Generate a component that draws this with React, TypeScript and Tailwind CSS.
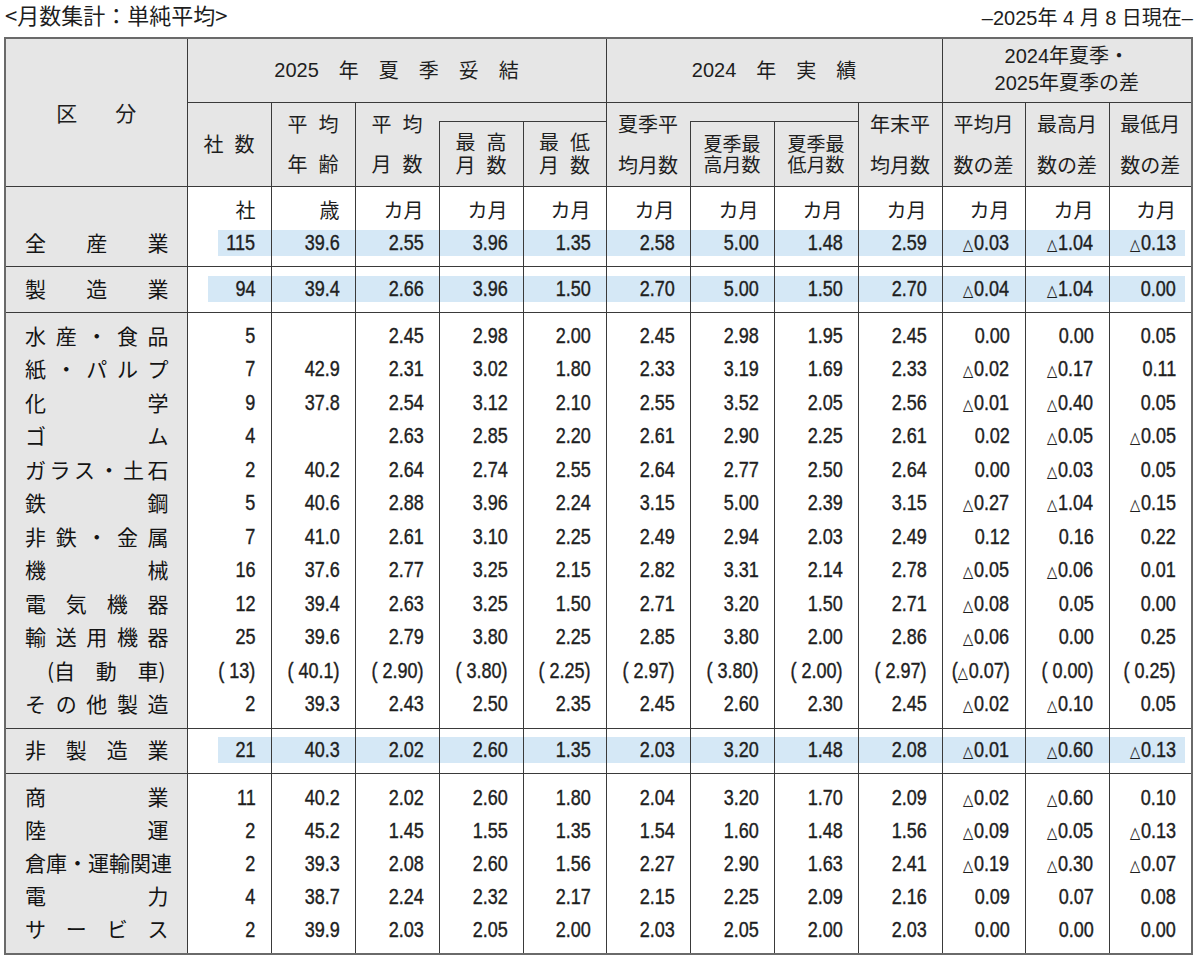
import React from 'react';

// 月数集計テーブル (単純平均)

const NUM = "font-['Liberation_Sans','Noto_Sans_CJK_JP',sans-serif]";
const JP = "font-['Noto_Sans_CJK_JP',sans-serif]";
const LINE = 'border-[#3a3a3a]';
const GRAY = 'bg-[#e6e6e6]';
const BAND = 'bg-[#d5e8f6]';

type Row = { label: string[]; indent?: boolean; v: string[] };

const manufacturing: Row[] = [
  { label: ['水', '産', '・', '食', '品'], v: ['5', '', '2.45', '2.98', '2.00', '2.45', '2.98', '1.95', '2.45', '0.00', '0.00', '0.05'] },
  { label: ['紙', '・', 'パ', 'ル', 'プ'], v: ['7', '42.9', '2.31', '3.02', '1.80', '2.33', '3.19', '1.69', '2.33', '△0.02', '△0.17', '0.11'] },
  { label: ['化', '学'], v: ['9', '37.8', '2.54', '3.12', '2.10', '2.55', '3.52', '2.05', '2.56', '△0.01', '△0.40', '0.05'] },
  { label: ['ゴ', 'ム'], v: ['4', '', '2.63', '2.85', '2.20', '2.61', '2.90', '2.25', '2.61', '0.02', '△0.05', '△0.05'] },
  { label: ['ガ', 'ラ', 'ス', '・', '土', '石'], v: ['2', '40.2', '2.64', '2.74', '2.55', '2.64', '2.77', '2.50', '2.64', '0.00', '△0.03', '0.05'] },
  { label: ['鉄', '鋼'], v: ['5', '40.6', '2.88', '3.96', '2.24', '3.15', '5.00', '2.39', '3.15', '△0.27', '△1.04', '△0.15'] },
  { label: ['非', '鉄', '・', '金', '属'], v: ['7', '41.0', '2.61', '3.10', '2.25', '2.49', '2.94', '2.03', '2.49', '0.12', '0.16', '0.22'] },
  { label: ['機', '械'], v: ['16', '37.6', '2.77', '3.25', '2.15', '2.82', '3.31', '2.14', '2.78', '△0.05', '△0.06', '0.01'] },
  { label: ['電', '気', '機', '器'], v: ['12', '39.4', '2.63', '3.25', '1.50', '2.71', '3.20', '1.50', '2.71', '△0.08', '0.05', '0.00'] },
  { label: ['輸', '送', '用', '機', '器'], v: ['25', '39.6', '2.79', '3.80', '2.25', '2.85', '3.80', '2.00', '2.86', '△0.06', '0.00', '0.25'] },
  { label: ['(自', '動', '車)'], indent: true, v: ['( 13)', '( 40.1)', '( 2.90)', '( 3.80)', '( 2.25)', '( 2.97)', '( 3.80)', '( 2.00)', '( 2.97)', '(△0.07)', '( 0.00)', '( 0.25)'] },
  { label: ['そ', 'の', '他', '製', '造'], v: ['2', '39.3', '2.43', '2.50', '2.35', '2.45', '2.60', '2.30', '2.45', '△0.02', '△0.10', '0.05'] },
];

const nonManufacturing: Row[] = [
  { label: ['商', '業'], v: ['11', '40.2', '2.02', '2.60', '1.80', '2.04', '3.20', '1.70', '2.09', '△0.02', '△0.60', '0.10'] },
  { label: ['陸', '運'], v: ['2', '45.2', '1.45', '1.55', '1.35', '1.54', '1.60', '1.48', '1.56', '△0.09', '△0.05', '△0.13'] },
  { label: ['倉', '庫', '・', '運', '輸', '関', '連'], v: ['2', '39.3', '2.08', '2.60', '1.56', '2.27', '2.90', '1.63', '2.41', '△0.19', '△0.30', '△0.07'] },
  { label: ['電', '力'], v: ['4', '38.7', '2.24', '2.32', '2.17', '2.15', '2.25', '2.09', '2.16', '0.09', '0.07', '0.08'] },
  { label: ['サ', 'ー', 'ビ', 'ス'], v: ['2', '39.9', '2.03', '2.05', '2.00', '2.03', '2.05', '2.00', '2.03', '0.00', '0.00', '0.00'] },
];

const colWidths = ['w-[84px]', 'w-[84px]', 'w-[84px]', 'w-[84px]', 'w-[83px]', 'w-[84px]', 'w-[84px]', 'w-[84px]', 'w-[84px]', 'w-[83px]', 'w-[84px]', 'w-[83px]'];

// narrow figures: Arial-width face squeezed toward the right edge
function Val({ s }: { s: string }) {
  const parts = s.split('△');
  return (
    <span className="inline-block origin-right scale-x-[0.82] [-webkit-text-stroke:0.4px_#1e1e1e]">
      {parts.length === 1 ? (
        s
      ) : (
        <>
          {parts[0]}
          <span className="font-['DejaVu_Sans',sans-serif] text-[16px] mr-[1px] [-webkit-text-stroke:0.2px_#1e1e1e]">△</span>
          {parts[1]}
        </>
      )}
    </span>
  );
}

function Label({ chars, indent, h }: { chars: string[]; indent?: boolean; h: string }) {
  return (
    <div className={`flex items-center justify-between ${h} ${indent ? 'pl-[41px] pr-[21px]' : chars.length > 6 ? 'pl-[19px] pr-[17px]' : 'pl-[19px] pr-[18px]'}`}>
      {chars.map((c, i) => (
        <span key={i}>{c}</span>
      ))}
    </div>
  );
}

function DataRow({ row, h, pad, top }: { row: Row; h: string; pad: string; top: boolean }) {
  return (
    <tr>
      <td className={`${GRAY} border-r ${LINE} p-0 ${pad} ${top ? 'border-t' : ''} text-[21px] text-[#141414] ${JP}`}>
        <Label chars={row.label} indent={row.indent} h={h} />
      </td>
      {row.v.map((s, i) => (
        <td key={i} className={`p-0 ${pad} ${i < 11 ? 'border-r' : ''} ${top ? 'border-t' : ''} ${LINE}`}>
          <div className={`${h} flex items-center justify-end pr-[15px] whitespace-pre`}>
            <Val s={s} />
          </div>
        </td>
      ))}
    </tr>
  );
}

function BandRow({ row, start, pad, top }: { row: Row; start: string; pad: string; top: boolean }) {
  return (
    <tr>
      <td className={`${GRAY} border-r ${LINE} p-0 ${pad} ${top ? 'border-t' : ''} text-[21px] text-[#141414] ${JP}`}>
        <Label chars={row.label} h="h-[26px]" />
      </td>
      {row.v.map((s, i) => (
        <td key={i} className={`p-0 ${pad} ${i < 11 ? 'border-r' : ''} ${top ? 'border-t' : ''} ${LINE}`}>
          <div
            className={`h-[26px] ${BAND} flex items-center justify-end ${i === 0 ? start : ''} ${
              i === 11 ? 'mr-[6px] pr-[9px]' : 'pr-[15px]'
            }`}
          >
            <Val s={s} />
          </div>
        </td>
      ))}
    </tr>
  );
}

function Spread({ a, b, gap }: { a: React.ReactNode; b: React.ReactNode; gap: string }) {
  return (
    <div className={`flex flex-col items-center leading-[20px] ${gap}`}>
      <div>{a}</div>
      <div>{b}</div>
    </div>
  );
}

function Pair({ x, y }: { x: string; y: string }) {
  return (
    <span className="inline-flex gap-[11px]">
      <span>{x}</span>
      <span>{y}</span>
    </span>
  );
}

export default function App() {
  const units = ['社', '歳', 'カ月', 'カ月', 'カ月', 'カ月', 'カ月', 'カ月', 'カ月', 'カ月', 'カ月', 'カ月'];

  return (
    <div className={`w-[1200px] h-[958px] bg-white pl-[4px] text-[#1e1e1e] ${JP}`}>
      <div className="h-[37px] w-[1189px] flex items-start justify-between pt-[3px]">
        <div className="text-[22px] leading-[22px] pl-[1px]">&lt;月数集計：単純平均&gt;</div>
        <div className={`text-[20px] leading-[22px] pt-[4px] ${NUM}`}>–2025年 4 月 8 日現在–</div>
      </div>

      <table className={`table-fixed border-collapse w-[1189px] border-2 border-[#6a6a6a] ${NUM} text-[22px]`}>
        <colgroup>
          <col className="w-[182px]" />
          {colWidths.map((w, i) => (
            <col key={i} className={w} />
          ))}
        </colgroup>
        <thead className={`${GRAY} ${JP} text-[20px] font-normal`}>
          <tr className="h-[64px]">
            <th rowSpan={3} className={`border-r ${LINE} font-normal`}>
              <div className="flex justify-center gap-[38px] text-[21px]">
                <span>区</span>
                <span>分</span>
              </div>
            </th>
            <th colSpan={5} className={`border-r border-b ${LINE} font-normal`}>
              <div className="flex justify-center items-center gap-[20px]">
                <span className={NUM}>2025</span>
                <span>年</span>
                <span>夏</span>
                <span>季</span>
                <span>妥</span>
                <span>結</span>
              </div>
            </th>
            <th colSpan={4} className={`border-r border-b ${LINE} font-normal`}>
              <div className="flex justify-center items-center gap-[20px]">
                <span className={NUM}>2024</span>
                <span>年</span>
                <span>実</span>
                <span>績</span>
              </div>
            </th>
            <th colSpan={3} className={`border-b ${LINE} font-normal leading-[27px] ${NUM}`}>
              <div>2024年夏季・</div>
              <div>2025年夏季の差</div>
            </th>
          </tr>
          <tr className="h-[19px]">
            <th rowSpan={2} className={`border-r ${LINE} font-normal`}>
              <Pair x="社" y="数" />
            </th>
            <th rowSpan={2} className={`border-r ${LINE} font-normal`}>
              <Spread a={<Pair x="平" y="均" />} b={<Pair x="年" y="齢" />} gap="gap-[20px]" />
            </th>
            <th rowSpan={2} className="font-normal">
              <Spread a={<Pair x="平" y="均" />} b={<Pair x="月" y="数" />} gap="gap-[20px]" />
            </th>
            <th colSpan={2} className={`border-r border-b ${LINE}`} />
            <th rowSpan={2} className="font-normal">
              <Spread a="夏季平" b="均月数" gap="gap-[21px]" />
            </th>
            <th colSpan={2} className={`border-r border-b ${LINE}`} />
            <th rowSpan={2} className={`border-r ${LINE} font-normal`}>
              <Spread a="年末平" b="均月数" gap="gap-[21px]" />
            </th>
            <th rowSpan={2} className={`border-r ${LINE} font-normal`}>
              <Spread a="平均月" b="数の差" gap="gap-[21px]" />
            </th>
            <th rowSpan={2} className={`border-r ${LINE} font-normal`}>
              <Spread a="最高月" b="数の差" gap="gap-[21px]" />
            </th>
            <th rowSpan={2} className="font-normal">
              <Spread a="最低月" b="数の差" gap="gap-[21px]" />
            </th>
          </tr>
          <tr className="h-[65px]">
            <th className={`border-l border-r ${LINE} font-normal`}>
              <Spread a={<Pair x="最" y="高" />} b={<Pair x="月" y="数" />} gap="gap-[3px]" />
            </th>
            <th className={`border-r ${LINE} font-normal`}>
              <Spread a={<Pair x="最" y="低" />} b={<Pair x="月" y="数" />} gap="gap-[3px]" />
            </th>
            <th className={`border-l border-r ${LINE} font-normal text-[19px]`}>
              <Spread a="夏季最" b="高月数" gap="gap-[1px]" />
            </th>
            <th className={`border-r ${LINE} font-normal text-[19px]`}>
              <Spread a="夏季最" b="低月数" gap="gap-[1px]" />
            </th>
          </tr>
        </thead>
        <tbody>
          {/* 単位 */}
          <tr>
            <td className={`${GRAY} border-r border-t ${LINE} p-0`}>
              <div className="h-[43px]" />
            </td>
            {units.map((u, i) => (
              <td key={i} className={`p-0 border-t ${i < 11 ? 'border-r' : ''} ${LINE}`}>
                <div className={`h-[43px] flex items-end justify-end pr-[15px] pb-[8px] text-[20px] leading-[24px] ${JP}`}>{u}</div>
              </td>
            ))}
          </tr>
          <BandRow
            row={{ label: ['全', '産', '業'], v: ['115', '39.6', '2.55', '3.96', '1.35', '2.58', '5.00', '1.48', '2.59', '△0.03', '△1.04', '△0.13'] }}
            start="ml-[30px]"
            pad="pb-[10px]"
            top={false}
          />
          <BandRow
            row={{ label: ['製', '造', '業'], v: ['94', '39.4', '2.66', '3.96', '1.50', '2.70', '5.00', '1.50', '2.70', '△0.04', '△1.04', '0.00'] }}
            start="ml-[20px]"
            pad="pt-[9px] pb-[10px]"
            top
          />
          {manufacturing.map((r, i) => (
            <DataRow
              key={i}
              row={r}
              h="h-[33.5px]"
              pad={i === 0 ? 'pt-[6px]' : i === manufacturing.length - 1 ? 'pb-[7px]' : ''}
              top={i === 0}
            />
          ))}
          <BandRow
            row={{ label: ['非', '製', '造', '業'], v: ['21', '40.3', '2.02', '2.60', '1.35', '2.03', '3.20', '1.48', '2.08', '△0.01', '△0.60', '△0.13'] }}
            start="ml-[30px]"
            pad="pt-[8px] pb-[10px]"
            top
          />
          {nonManufacturing.map((r, i) => (
            <DataRow
              key={i}
              row={r}
              h="h-[33px]"
              pad={i === 0 ? 'pt-[7px]' : i === nonManufacturing.length - 1 ? 'pb-[7px]' : ''}
              top={i === 0}
            />
          ))}
        </tbody>
      </table>
    </div>
  );
}
